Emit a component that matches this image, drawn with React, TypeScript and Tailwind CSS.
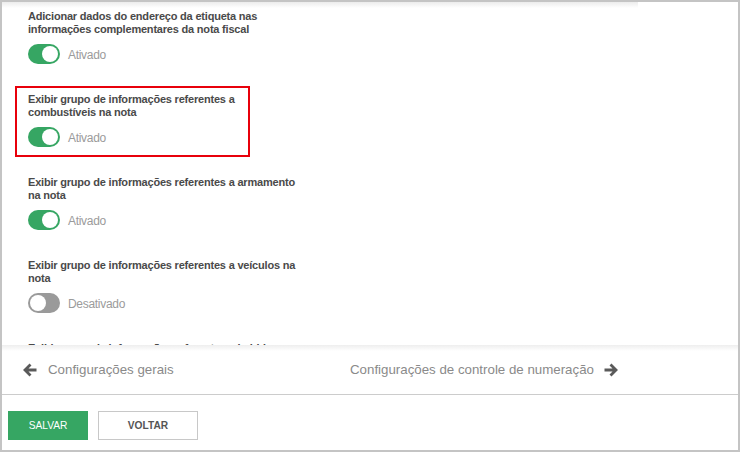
import React from "react";

function Toggle({ on }: { on: boolean }) {
  return (
    <div
      className={
        "relative h-[20px] w-[32px] rounded-full " +
        (on ? "bg-[#36a663]" : "bg-[#9a9a9a]")
      }
    >
      <div
        className={
          "absolute top-[2px] h-[16px] w-[16px] rounded-full bg-white " +
          (on ? "left-[14px]" : "left-[2px]")
        }
      />
    </div>
  );
}

function Item({
  lines,
  on,
  highlight,
}: {
  lines: string[];
  on: boolean;
  highlight?: boolean;
}) {
  return (
    <div className="relative pb-[29px]">
      {highlight && (
        <div className="pointer-events-none absolute left-[-13px] top-[-7px] h-[71px] w-[235px] border-[2.5px] border-[#e8000b]" />
      )}
      <div className="text-[11px] font-bold leading-[13px] tracking-[-0.2px] text-[#4a4a4a]">
        {lines.map((l, i) => (
          <div key={i} className="whitespace-nowrap">
            {l}
          </div>
        ))}
      </div>
      <div className="mt-[8px] flex h-[20px] items-center gap-[8px]">
        <Toggle on={on} />
        <span className="pt-[2px] text-[12px] tracking-[-0.3px] text-[#9b9b9b]">
          {on ? "Ativado" : "Desativado"}
        </span>
      </div>
    </div>
  );
}

export default function App() {
  return (
    <div
      className="flex h-[452px] w-[740px] flex-col overflow-hidden border-2 border-[#c4c4c4] bg-white"
      style={{ fontFamily: "'Liberation Sans', Arial, sans-serif" }}
    >
      <div className="relative h-[343px] shrink-0 overflow-hidden">
        <div className="absolute left-0 top-0 h-[6px] w-[636px] bg-gradient-to-b from-[#ececec] to-white" />
        <div className="relative pl-[26px] pt-[8px]">
          <Item
            lines={[
              "Adicionar dados do endereço da etiqueta nas",
              "informações complementares da nota fiscal",
            ]}
            on
          />
          <Item
            lines={[
              "Exibir grupo de informações referentes a",
              "combustíveis na nota",
            ]}
            on
            highlight
          />
          <Item
            lines={[
              "Exibir grupo de informações referentes a armamento",
              "na nota",
            ]}
            on
          />
          <Item
            lines={[
              "Exibir grupo de informações referentes a veículos na",
              "nota",
            ]}
            on={false}
          />
          <Item
            lines={[
              "Exibir grupo de informações referentes a bebidas",
              "na nota",
            ]}
            on
          />
        </div>
      </div>
      <div className="relative flex h-[50px] shrink-0 items-center border-b border-[#cccccc]">
        <div className="absolute left-0 top-0 h-[6px] w-full bg-gradient-to-b from-[#eeeeee] to-white" />
        <div className="relative flex w-[322px] items-center pl-[20px]">
          <svg width="16" height="16" viewBox="0 0 16 16" className="mr-[10px]">
            <path
              d="M14.5 8H3M8.5 2.5L3 8l5.5 5.5"
              fill="none"
              stroke="#5a5a5a"
              strokeWidth="2.8"
              strokeLinecap="butt"
              strokeLinejoin="miter"
            />
          </svg>
          <span className="text-[13.3px] text-[#8a8a8a]">Configurações gerais</span>
        </div>
        <div className="relative ml-[26px] flex items-center">
          <span className="text-[13.3px] text-[#8a8a8a]">
            Configurações de controle de numeração
          </span>
          <svg width="16" height="16" viewBox="0 0 16 16" className="ml-[9px]">
            <path
              d="M1.5 8H13M7.5 2.5L13 8l-5.5 5.5"
              fill="none"
              stroke="#5a5a5a"
              strokeWidth="2.8"
              strokeLinecap="butt"
              strokeLinejoin="miter"
            />
          </svg>
        </div>
      </div>
      <div className="flex flex-1 items-start gap-[10px] pl-[6px] pt-[16px]">
        <button className="flex h-[29px] w-[80px] items-center justify-center bg-[#36a663] text-[10.2px] text-white">
          SALVAR
        </button>
        <button className="flex h-[29px] w-[100px] items-center justify-center border border-[#c8c8c8] bg-white text-[10.2px] font-bold text-[#555555]">
          VOLTAR
        </button>
      </div>
    </div>
  );
}
